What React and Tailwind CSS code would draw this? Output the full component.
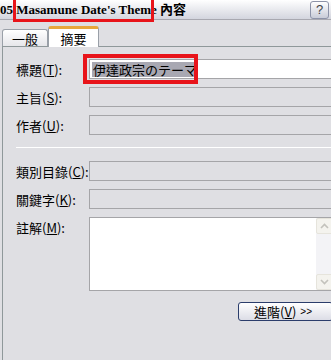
import React from 'react';

const font = { fontFamily: '"Noto Sans CJK TC", "Liberation Sans", sans-serif' };

function Row({ label, k, white, children }) {
  return (
    <div className="flex items-center h-[20px]">
      <div className="w-[73px] shrink-0 text-[13px] leading-none text-black whitespace-nowrap">
        {label}(<span className="underline">{k}</span>):
      </div>
      <div className={`flex-1 h-[20px] border border-[#a5a5a8] ${white ? 'bg-white' : 'bg-[#dfdfe3]'} flex items-center`}>
        {children}
      </div>
    </div>
  );
}

export default function App() {
  return (
    <div className="w-[331px] h-[360px] overflow-hidden bg-[#dfdfe3] relative" style={font}>
      {/* title bar */}
      <div className="h-[20px] flex items-center justify-between bg-gradient-to-b from-white to-[#d3d5de] border-b border-[#a8a8b0]">
        <div className="text-[13px] font-bold text-black whitespace-nowrap leading-none" style={{ fontFamily: '"Liberation Serif", "Noto Sans CJK TC", serif' }}>
          05 Masamune Date's Theme 內容
        </div>
        <div className="w-[19px] h-[18px] mr-[2px] rounded-[3px] border border-[#8d93a8] bg-gradient-to-b from-white to-[#c9ccd8] flex items-center justify-center text-[13px] text-[#444] leading-none" style={{ fontFamily: '"Liberation Sans", sans-serif' }}>
          ?
        </div>
      </div>

      {/* tabs */}
      <div className="flex items-end pl-[2px] mt-[5px] h-[21px]">
        <div className="w-[46px] h-[17px] border border-[#9aa0a8] border-b-0 rounded-t-[3px] bg-gradient-to-b from-white to-[#e6e6ea] text-[13px] leading-none flex items-center justify-center">
          一般
        </div>
        <div className="w-[51px] h-[21px] border border-[#9aa0a8] border-b-0 border-t-[3px] border-t-[#e8a83c] rounded-t-[3px] bg-white text-[13px] leading-none flex items-center justify-center -mb-px relative z-10">
          摘要
        </div>
      </div>

      {/* panel */}
      <div className="ml-[2px] w-[360px] h-[320px] border border-[#8f989a] bg-[#dfdfe3] pl-[13px] pr-[27px] pt-[12px]">
        <div className="flex flex-col gap-[8px]">
          <Row label="標題" k="T" white>
            <span className="ml-[2px] bg-[#a8a8b2] text-[13px] leading-[15px] px-[1px] text-black">伊達政宗のテーマ</span>
          </Row>
          <Row label="主旨" k="S" />
          <Row label="作者" k="U" />
        </div>
        <div className="h-px bg-[#a5a5a8] mt-[12px] mb-[13px] border-b border-white" />
        <div className="flex flex-col gap-[8px]">
          <Row label="類別目錄" k="C" />
          <Row label="關鍵字" k="K" />
          <div className="flex">
            <div className="w-[73px] shrink-0 text-[13px] leading-none pt-[4px] whitespace-nowrap">
              註解(<span className="underline">M</span>):
            </div>
            <div className="flex-1 h-[74px] border border-[#a5a5a8] bg-white flex justify-end">
              <div className="w-[17px] bg-[#f3f3f6] flex flex-col justify-between">
                <div className="h-[16px] rounded-[2px] border border-[#e6e4dc] bg-[#f4f3ee] flex items-center justify-center">
                  <svg width="9" height="6" viewBox="0 0 9 6"><path d="M1 5 L4.5 1.5 L8 5" fill="none" stroke="#c3c2bc" strokeWidth="1.6" /></svg>
                </div>
                <div className="h-[16px] rounded-[2px] border border-[#e6e4dc] bg-[#f4f3ee] flex items-center justify-center">
                  <svg width="9" height="6" viewBox="0 0 9 6"><path d="M1 1 L4.5 4.5 L8 1" fill="none" stroke="#c3c2bc" strokeWidth="1.6" /></svg>
                </div>
              </div>
            </div>
          </div>
        </div>
        <div className="flex mt-[11px] pl-[222px]">
          <div className="w-[95px] h-[19px] rounded-[3px] border border-[#2b3d6b] bg-gradient-to-b from-white to-[#dcdde6] flex items-center pl-[15px] text-[13px] leading-none whitespace-nowrap">
            進階(<span className="underline">V</span>)<span className="ml-[4px] text-[10px]" style={{ fontFamily: '"Liberation Sans", sans-serif' }}>&gt;&gt;</span>
          </div>
        </div>
      </div>

      {/* annotation boxes */}
      <div className="absolute left-[13px] top-[-3px] w-[141px] h-[25px] border-[3px] border-[#e8141a]" />
      <div className="absolute left-[83px] top-[54px] w-[115px] h-[30px] border-[4px] border-[#e8141a]" />
    </div>
  );
}
